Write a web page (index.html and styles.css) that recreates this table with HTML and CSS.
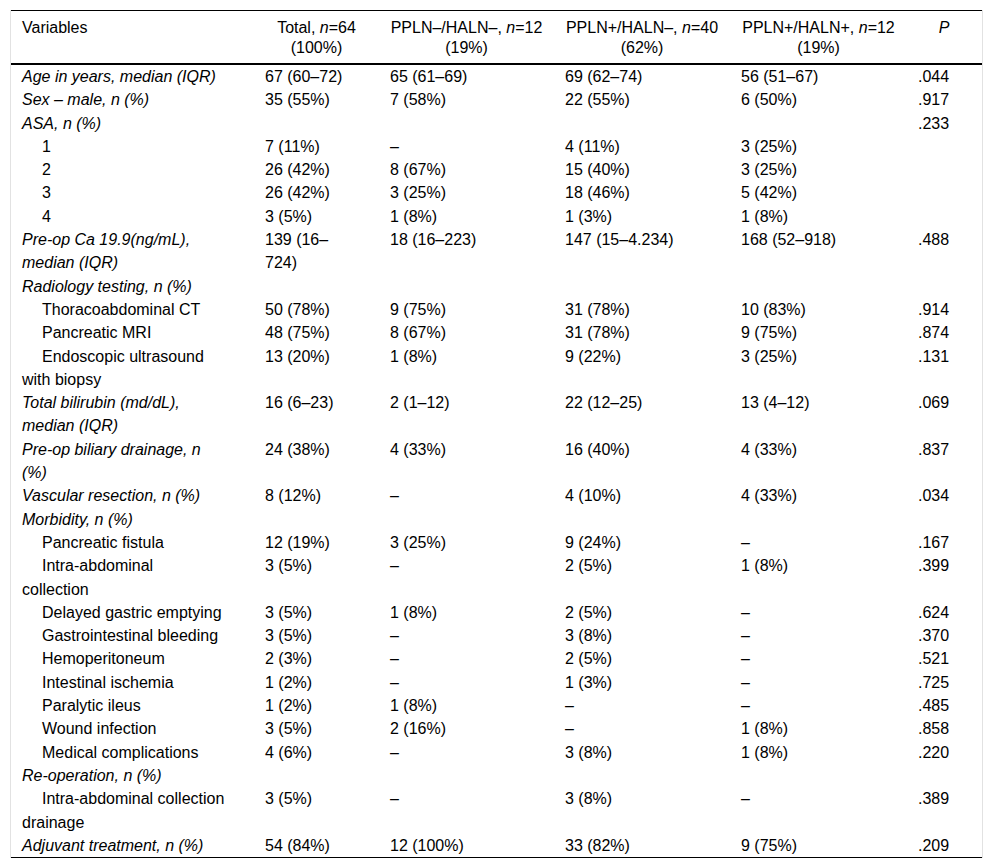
FILE: index.html
```html
<!DOCTYPE html>
<html lang="en">
<head>
<meta charset="utf-8">
<title>Table</title>
<link rel="stylesheet" href="styles.css">
</head>
<body>
<div class="frame">
<table class="data">
<colgroup>
<col class="c-var"><col class="c-tot"><col class="c-g1"><col class="c-g2"><col class="c-g3"><col class="c-p">
</colgroup>
<thead>
<tr>
<th class="left">Variables</th>
<th>Total, <i>n</i>=64<br>(100%)</th>
<th>PPLN–/HALN–, <i>n</i>=12<br>(19%)</th>
<th>PPLN+/HALN–, <i>n</i>=40<br>(62%)</th>
<th>PPLN+/HALN+, <i>n</i>=12<br>(19%)</th>
<th><i>P</i></th>
</tr>
</thead>
<tbody>
<tr><td class="cat">Age in years, median (IQR)</td><td>67 (60–72)</td><td>65 (61–69)</td><td>69 (62–74)</td><td>56 (51–67)</td><td>.044</td></tr>
<tr><td class="cat">Sex – male, n (%)</td><td>35 (55%)</td><td>7 (58%)</td><td>22 (55%)</td><td>6 (50%)</td><td>.917</td></tr>
<tr><td class="cat">ASA, n (%)</td><td></td><td></td><td></td><td></td><td>.233</td></tr>
<tr><td class="sub">1</td><td>7 (11%)</td><td>–</td><td>4 (11%)</td><td>3 (25%)</td><td></td></tr>
<tr><td class="sub">2</td><td>26 (42%)</td><td>8 (67%)</td><td>15 (40%)</td><td>3 (25%)</td><td></td></tr>
<tr><td class="sub">3</td><td>26 (42%)</td><td>3 (25%)</td><td>18 (46%)</td><td>5 (42%)</td><td></td></tr>
<tr><td class="sub">4</td><td>3 (5%)</td><td>1 (8%)</td><td>1 (3%)</td><td>1 (8%)</td><td></td></tr>
<tr><td class="cat">Pre-op Ca 19.9(ng/mL),<br>median (IQR)</td><td>139 (16–<br>724)</td><td>18 (16–223)</td><td>147 (15–4.234)</td><td>168 (52–918)</td><td>.488</td></tr>
<tr><td class="cat">Radiology testing, n (%)</td><td></td><td></td><td></td><td></td><td></td></tr>
<tr><td class="sub">Thoracoabdominal CT</td><td>50 (78%)</td><td>9 (75%)</td><td>31 (78%)</td><td>10 (83%)</td><td>.914</td></tr>
<tr><td class="sub">Pancreatic MRI</td><td>48 (75%)</td><td>8 (67%)</td><td>31 (78%)</td><td>9 (75%)</td><td>.874</td></tr>
<tr><td class="sub">Endoscopic ultrasound<br>with biopsy</td><td>13 (20%)</td><td>1 (8%)</td><td>9 (22%)</td><td>3 (25%)</td><td>.131</td></tr>
<tr><td class="cat">Total bilirubin (md/dL),<br>median (IQR)</td><td>16 (6–23)</td><td>2 (1–12)</td><td>22 (12–25)</td><td>13 (4–12)</td><td>.069</td></tr>
<tr><td class="cat">Pre-op biliary drainage, n<br>(%)</td><td>24 (38%)</td><td>4 (33%)</td><td>16 (40%)</td><td>4 (33%)</td><td>.837</td></tr>
<tr><td class="cat">Vascular resection, n (%)</td><td>8 (12%)</td><td>–</td><td>4 (10%)</td><td>4 (33%)</td><td>.034</td></tr>
<tr><td class="cat">Morbidity, n (%)</td><td></td><td></td><td></td><td></td><td></td></tr>
<tr><td class="sub">Pancreatic fistula</td><td>12 (19%)</td><td>3 (25%)</td><td>9 (24%)</td><td>–</td><td>.167</td></tr>
<tr><td class="sub">Intra-abdominal<br>collection</td><td>3 (5%)</td><td>–</td><td>2 (5%)</td><td>1 (8%)</td><td>.399</td></tr>
<tr><td class="sub">Delayed gastric emptying</td><td>3 (5%)</td><td>1 (8%)</td><td>2 (5%)</td><td>–</td><td>.624</td></tr>
<tr><td class="sub">Gastrointestinal bleeding</td><td>3 (5%)</td><td>–</td><td>3 (8%)</td><td>–</td><td>.370</td></tr>
<tr><td class="sub">Hemoperitoneum</td><td>2 (3%)</td><td>–</td><td>2 (5%)</td><td>–</td><td>.521</td></tr>
<tr><td class="sub">Intestinal ischemia</td><td>1 (2%)</td><td>–</td><td>1 (3%)</td><td>–</td><td>.725</td></tr>
<tr><td class="sub">Paralytic ileus</td><td>1 (2%)</td><td>1 (8%)</td><td>–</td><td>–</td><td>.485</td></tr>
<tr><td class="sub">Wound infection</td><td>3 (5%)</td><td>2 (16%)</td><td>–</td><td>1 (8%)</td><td>.858</td></tr>
<tr><td class="sub">Medical complications</td><td>4 (6%)</td><td>–</td><td>3 (8%)</td><td>1 (8%)</td><td>.220</td></tr>
<tr><td class="cat">Re-operation, n (%)</td><td></td><td></td><td></td><td></td><td></td></tr>
<tr><td class="sub">Intra-abdominal collection<br>drainage</td><td>3 (5%)</td><td>–</td><td>3 (8%)</td><td>–</td><td>.389</td></tr>
<tr><td class="cat">Adjuvant treatment, n (%)</td><td>54 (84%)</td><td>12 (100%)</td><td>33 (82%)</td><td>9 (75%)</td><td>.209</td></tr>
</tbody>
</table>
</div>
</body>
</html>
```

FILE: styles.css
```css
html, body {
  margin: 0;
  padding: 0;
  background: #fff;
}

body {
  padding: 10px 9px 0 10px;
  font-family: "Liberation Sans", Arial, sans-serif;
  font-size: 16px;
  color: #000;
}

.frame {
  border-left: 1px solid #e2e2e2;
  border-right: 1px solid #e2e2e2;
}

.data {
  width: 100%;
  table-layout: fixed;
  border-collapse: separate;
  border-spacing: 0;
  border-top: 1px solid #000;
  border-bottom: 1px solid #000;
  font-size: 16px;
}

.c-var { width: 244px; }
.c-tot { width: 125px; }
.c-g1 { width: 175px; }
.c-g2 { width: 176px; }
.c-g3 { width: 177px; }
.c-p { width: 74px; }

.data th {
  font-weight: normal;
  text-align: center;
  vertical-align: top;
  line-height: 20px;
  padding: 7px 12px 5px 10px;
  border-bottom: 2px solid #000;
  white-space: nowrap;
}

.data th.left {
  text-align: left;
  padding-left: 11px;
}

.data td {
  text-align: left;
  vertical-align: top;
  line-height: 23.3px;
  padding: 0 10px;
  white-space: nowrap;
}

.data td:first-child {
  padding-left: 11px;
}

.data td.cat {
  font-style: italic;
}

.data td.sub {
  text-indent: 20px;
}
```
